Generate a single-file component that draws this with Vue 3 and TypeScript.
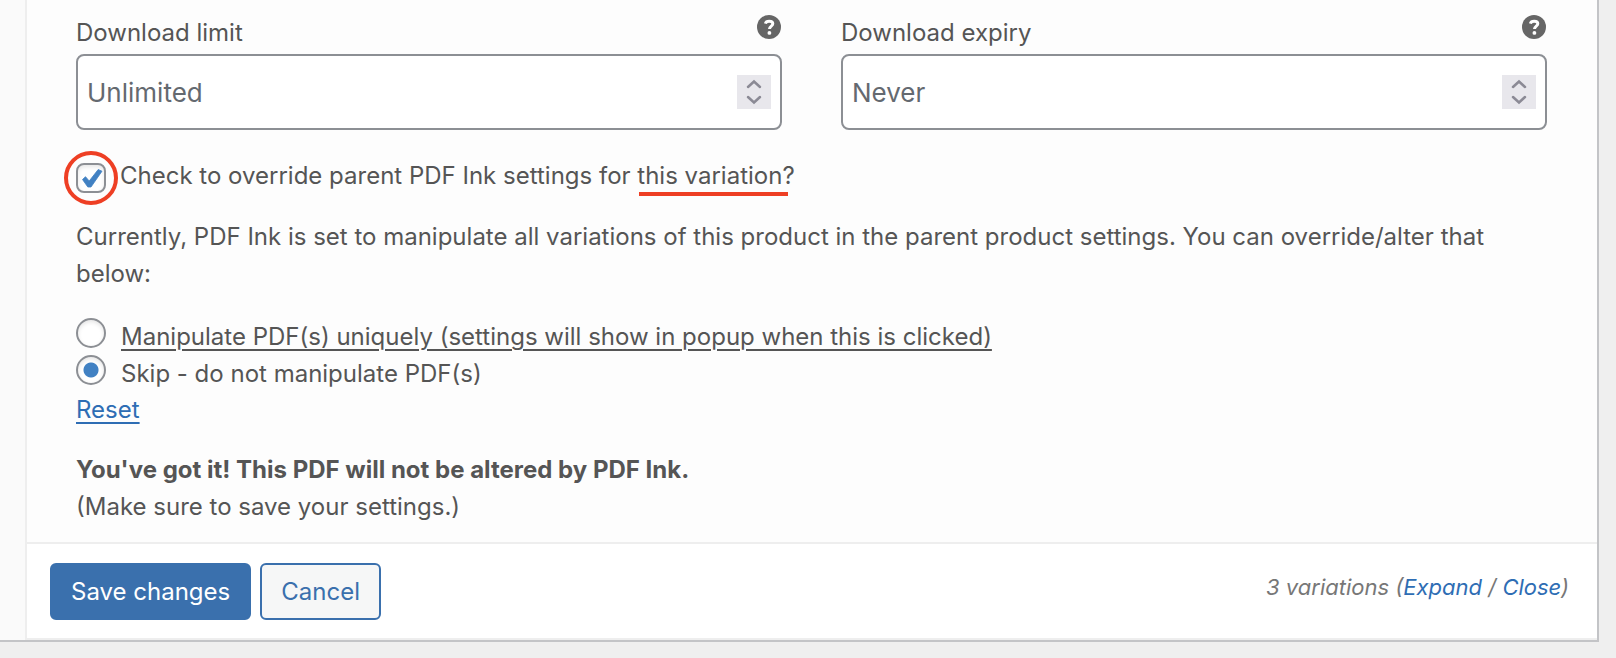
<script setup lang="ts">
import { ref } from 'vue'

interface LimitField {
  id: string
  label: string
  placeholder: string
  value: number | null
}

const fields = ref<LimitField[]>([
  { id: 'download-limit', label: 'Download limit', placeholder: 'Unlimited', value: null },
  { id: 'download-expiry', label: 'Download expiry', placeholder: 'Never', value: null },
])
const override = ref(true)
const mode = ref<'unique' | 'skip'>('skip')

function step(field: LimitField, by: number) {
  field.value = Math.max(0, (Number(field.value) || 0) + by)
}
</script>

<template>
  <main class="page">
    <section class="panel">
      <div class="body">
        <div class="fields">
          <div v-for="f in fields" :key="f.id" class="field">
            <div class="field-head">
              <label :for="f.id">{{ f.label }}</label>
              <svg class="help" viewBox="0 0 24 24" aria-hidden="true">
                <circle cx="12" cy="12" r="12" fill="#666" />
                <path d="M8.400 8.600C8.800 7 10.300 6.300 12.200 6.300c2.200 0 3.600 0.900 3.600 2.500 0 2.400-3.300 2.300-3.300 5.200" fill="none" stroke="#fff" stroke-width="3" />
                <circle cx="12.400" cy="17.900" r="1.900" fill="#fff" />
              </svg>
            </div>
            <div class="number">
              <input :id="f.id" v-model="f.value" type="number" min="0" :placeholder="f.placeholder" />
              <div class="stepper">
                <button type="button" aria-label="Increase" @click="step(f, 1)">
                  <svg viewBox="0 0 34 17"><path d="M11 12l6-5.500 6 5.500" /></svg>
                </button>
                <button type="button" aria-label="Decrease" @click="step(f, -1)">
                  <svg viewBox="0 0 34 17"><path d="M11 5l6 5.500 6-5.500" /></svg>
                </button>
              </div>
            </div>
          </div>
        </div>

        <div class="override">
          <span class="tick">
            <input id="override" v-model="override" type="checkbox" />
            <svg v-if="override" class="mark" viewBox="0 0 30 30" aria-hidden="true">
              <path d="M6.500 16.500l3-2.800 3.700 4.300L22.200 6.500 26 8.200 15 24h-3.200z" fill="#4181c3" stroke="#4181c3" stroke-width="0.800" stroke-linejoin="round" />
            </svg>
            <span class="ring"></span>
          </span>
          <label for="override">Check to override parent PDF Ink settings for <span class="marked">this variation</span>?</label>
        </div>

        <p class="note">
          Currently, PDF Ink is set to manipulate all variations of this product in the parent product settings. You can override/alter that below:
        </p>

        <div class="choices">
          <div class="choice">
            <input id="mode-unique" v-model="mode" type="radio" name="mode" value="unique" />
            <label for="mode-unique" class="underlined">Manipulate PDF(s) uniquely (settings will show in popup when this is clicked)</label>
          </div>
          <div class="choice">
            <input id="mode-skip" v-model="mode" type="radio" name="mode" value="skip" />
            <label for="mode-skip">Skip - do not manipulate PDF(s)</label>
          </div>
          <a class="reset" href="#">Reset</a>
        </div>

        <p class="result">
          <strong>You've got it! This PDF will not be altered by PDF Ink.</strong><br />
          (Make sure to save your settings.)
        </p>
      </div>

      <footer class="toolbar">
        <button type="button" class="btn primary">Save changes</button>
        <button type="button" class="btn">Cancel</button>
        <span class="count">3 variations (<a href="#">Expand</a> / <a href="#">Close</a>)</span>
      </footer>
    </section>
  </main>
</template>

<style>
body {
  margin: 0;
  background: #efefef;
}
</style>

<style scoped>
.page {
  box-sizing: border-box;
  margin-right: 17px;
  padding-left: 25px;
  background: #fafafa;
  border-right: 2px solid #c3c4c7;
  border-bottom: 2px solid #c3c4c7;
  color: #555;
  font: 24px/37px Inter, "Liberation Sans", sans-serif;
}
.panel {
  border-left: 2px solid #eee;
  border-bottom: 2px solid #eee;
}
.body {
  padding: 14px 50px 17px 49px;
  background: #fdfdfd;
  border-bottom: 2px solid #eee;
}
.fields {
  display: grid;
  grid-template-columns: 1fr 1fr;
  gap: 59px;
}
.field-head {
  display: flex;
  justify-content: space-between;
  height: 40px;
}
.field-head label {
  line-height: 37px;
}
.help {
  width: 24px;
  height: 24px;
  margin: 1px 1px 0 0;
}
.number {
  display: flex;
  align-items: center;
  box-sizing: border-box;
  height: 76px;
  padding: 0 9px;
  background: #fff;
  border: 2px solid #8c8f94;
  border-radius: 8px;
}
.number input {
  flex: 1;
  min-width: 0;
  height: 60px;
  padding: 0;
  border: 0;
  outline: 0;
  background: none;
  color: #646970;
  font: inherit;
  font-size: 26px;
  appearance: textfield;
}
.number input::placeholder {
  color: #646970;
  opacity: 1;
}
.number input::-webkit-inner-spin-button {
  appearance: none;
  margin: 0;
}
.stepper {
  display: flex;
  flex-direction: column;
  width: 34px;
  background: #e8e7ec;
}
.stepper button {
  height: 17px;
  padding: 0;
  border: 0;
  background: none;
}
.stepper svg {
  display: block;
  width: 34px;
  height: 17px;
  fill: none;
  stroke: #8b8a95;
  stroke-width: 2.5;
  stroke-linecap: round;
}
.override {
  display: flex;
  align-items: center;
  margin-top: 27px;
}
.tick {
  position: relative;
  width: 30px;
  height: 30px;
  margin: 4px 14px 0 0;
}
input[type='checkbox'],
input[type='radio'] {
  display: block;
  flex: none;
  appearance: none;
  box-sizing: border-box;
  width: 30px;
  height: 30px;
  margin: 0;
  background: #fff;
  border: 2px solid #8c8f94;
  border-radius: 8px;
  box-shadow: inset 0 2px 4px rgba(0, 0, 0, 0.1);
}
.mark {
  position: absolute;
  inset: 0;
  pointer-events: none;
}
.ring {
  position: absolute;
  inset: -12px;
  border: 4px solid #ee3f24;
  border-radius: 50%;
  pointer-events: none;
}
.marked {
  position: relative;
}
.marked::after {
  content: '';
  position: absolute;
  left: 2px;
  right: -6px;
  bottom: -6px;
  height: 4px;
  background: #ee3f24;
}
.note {
  margin: 24px 0 0;
}
.choices {
  margin-top: 26px;
}
.choice {
  display: flex;
  gap: 15px;
}
.choice label {
  height: 37px;
}
input[type='radio'] {
  border-radius: 50%;
}
input[type='radio']:checked {
  background: radial-gradient(circle, #4181c3 7px, #fff 8px);
}
.underlined {
  text-decoration: underline 2px;
  text-underline-offset: 4px;
}
a {
  color: #2e6db4;
}
.reset {
  display: block;
  width: fit-content;
  line-height: 35px;
  text-decoration: underline 2px;
  text-underline-offset: 4px;
}
.result {
  margin: 24px 0 0;
}
.result strong {
  font-weight: 700;
}
.toolbar {
  display: flex;
  align-items: center;
  gap: 9px;
  padding: 19px 28px 18px 23px;
  background: #fff;
}
.btn {
  height: 57px;
  padding: 0 19px;
  background: #f6f7f7;
  border: 2px solid #3a70ad;
  border-radius: 6px;
  color: #3a70ad;
  font: inherit;
}
.primary {
  background: #3a70ad;
  color: #fff;
}
.count {
  margin: 0 0 9px auto;
  color: #777;
  font-style: italic;
  font-size: 22px;
}
.count a {
  text-decoration: none;
}
</style>
